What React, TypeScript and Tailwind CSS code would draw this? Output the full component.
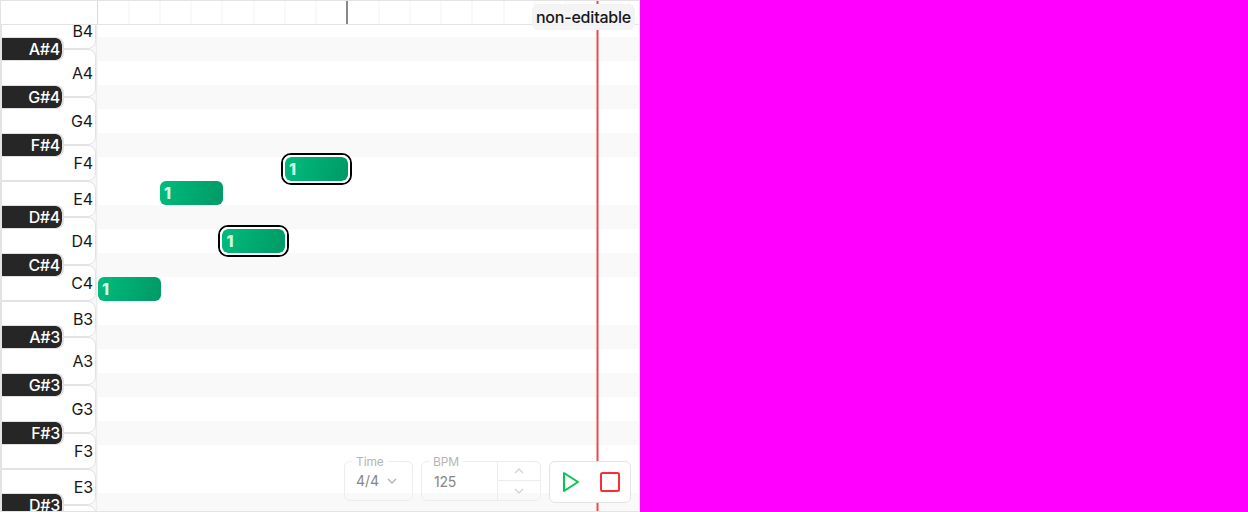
const F = "font-['Inter',sans-serif]";

const whiteKeys: [string, number][] = [
  ['B4', 36], ['A4', 48], ['G4', 48], ['F4', 36], ['E4', 36], ['D4', 48], ['C4', 36],
  ['B3', 36], ['A3', 48], ['G3', 48], ['F3', 36], ['E3', 36], ['', 48],
];
const rows = [
  'B4', 'A#4', 'A4', 'G#4', 'G4', 'F#4', 'F4', 'E4', 'D#4', 'D4', 'C#4', 'C4',
  'B3', 'A#3', 'A3', 'G#3', 'G3', 'F#3', 'F3', 'E3', 'D#3',
];
const notes = [
  { x: 0, y: 264, selected: false },
  { x: 62.5, y: 168, selected: false },
  { x: 125, y: 216, selected: true },
  { x: 187.5, y: 144, selected: true },
];

function Ruler() {
  return (
    <div className="flex h-6 shrink-0 border-b border-[#e3e3e3] bg-white">
      <div className="w-[97px] shrink-0 border-r border-[#d9d9d9]" />
      <div className="relative flex-1 overflow-hidden">
        {Array.from({ length: 17 }, (_, i) => i + 1).map((i) => (
          <div
            key={i}
            className={i === 8 ? 'absolute inset-y-0 w-0.5 bg-[#888888]' : 'absolute inset-y-0 w-0.5 bg-[#f9f9f9]'}
            style={{ left: i * 31.25 - 1.75 }}
          />
        ))}
      </div>
    </div>
  );
}

function Keyboard() {
  return (
    <div className="relative w-24 shrink-0 border-r border-[#ededed] bg-[#f7f7f7]">
      <div className="-mt-3 flex flex-col">
        {whiteKeys.map(([name, h], i) => (
          <div
            key={i}
            style={{ height: h }}
            className="flex shrink-0 items-center justify-end rounded-r-lg border border-[#e3e3e3] bg-white pr-[2px] text-base tracking-[-0.15px] text-neutral-900"
          >
            {name}
          </div>
        ))}
      </div>
      {rows.map((name, i) =>
        name.includes('#') ? (
          <div
            key={name}
            style={{ top: i * 24 - 12 }}
            className="absolute left-px flex h-6 w-[62px] items-center justify-end rounded-r-lg border-y border-r-2 border-[#e0e0e0] bg-[#262626] bg-clip-padding pr-[2px] text-base font-medium tracking-[-0.3px] text-white"
          >
            {name}
          </div>
        ) : null,
      )}
    </div>
  );
}

function Roll() {
  return (
    <div className="relative flex-1 overflow-hidden border-l border-[#f8f8f8]">
      <div className="-mt-3 flex flex-col">
        {rows.map((name) => (
          <div key={name} className={name.includes('#') ? 'h-6 shrink-0 bg-[#f9f9f9]' : 'h-6 shrink-0 bg-white'} />
        ))}
      </div>
      {notes.map((n) => (
        <div
          key={n.x}
          style={{ left: n.x === 0 ? 0 : n.x - 0.6, top: n.y - 12 }}
          className={
            'absolute flex h-6 w-[63px] items-center rounded-md bg-[linear-gradient(110deg,#00bc7d,#009966)] pl-1 text-base font-extrabold text-[#d0fae5]' +
            (n.selected ? ' outline-2 outline-offset-2 outline-black before:absolute before:-inset-0.5 before:rounded-lg before:border-2 before:border-white' : '')
          }
        >
          1
        </div>
      ))}
    </div>
  );
}

function Chevron({ up = false }: { up?: boolean }) {
  return (
    <svg width="10" height="6" viewBox="0 0 10 6" fill="none" stroke="currentColor" strokeWidth="1.4">
      <path d={up ? 'M1 5l4-4 4 4' : 'M1 1l4 4 4-4'} />
    </svg>
  );
}

function Controls() {
  return (
    <div className="absolute bottom-2 right-2 flex items-start gap-2">
      <div className="relative flex h-10 w-[69px] items-center gap-[9px] rounded-md border border-[#ededed] pl-[11px] text-sm text-[#868686]">
        <span className="absolute -top-2 left-[7px] bg-white px-1 text-xs leading-4 tracking-[-0.1px] text-[#b5b5b5]">Time</span>
        4/4
        <span className="-ml-px text-[#b5b5b5]"><Chevron /></span>
      </div>
      <div className="relative flex h-10 w-[120px] rounded-md border border-[#ededed] text-sm text-[#868686]">
        <span className="absolute -top-2 left-[7px] bg-white px-1 text-xs leading-4 tracking-[-0.1px] text-[#b5b5b5]">BPM</span>
        <span className="flex flex-1 items-center pl-3 pt-0.5 tracking-[-0.2px]">125</span>
        <div className="flex w-[43px] flex-col border-l border-[#ededed] text-[#d4d4d4]">
          <div className="flex h-[19px] items-center justify-center border-b border-[#ededed]"><Chevron up /></div>
          <div className="flex flex-1 items-center justify-center"><Chevron /></div>
        </div>
      </div>
      <div className="flex h-[42px] w-[82px] items-center rounded-md border border-[#e3e3e3] bg-white pl-3">
        <svg width="60" height="22" viewBox="0 0 60 22" fill="none" strokeWidth="2" strokeLinejoin="round">
          <path d="M2 2v18l14-9z" stroke="#00c950" />
          <rect x="39" y="2" width="18" height="18" rx="1.5" stroke="#fb2c36" />
        </svg>
      </div>
    </div>
  );
}

export default function App() {
  return (
    <div className={`h-[512px] w-[1248px] overflow-hidden bg-[#ff00ff] ${F}`}>
      <div className="relative flex h-full w-[640px] flex-col overflow-hidden border border-[#e3e3e3] bg-white">
        <Ruler />
        <div className="flex min-h-0 flex-1 overflow-hidden">
          <Keyboard />
          <Roll />
        </div>
        <div className="absolute inset-y-0 left-[595px] w-[3px] border-x border-[#f5a5a7] bg-[#e24a4d]" />
        <div className="absolute left-[531px] top-[3px] flex h-[26px] w-[103px] items-center justify-center rounded-md bg-[#f4f4f4] text-base font-medium tracking-[-0.2px] text-neutral-900">
          non-editable
        </div>
        <Controls />
      </div>
    </div>
  );
}
